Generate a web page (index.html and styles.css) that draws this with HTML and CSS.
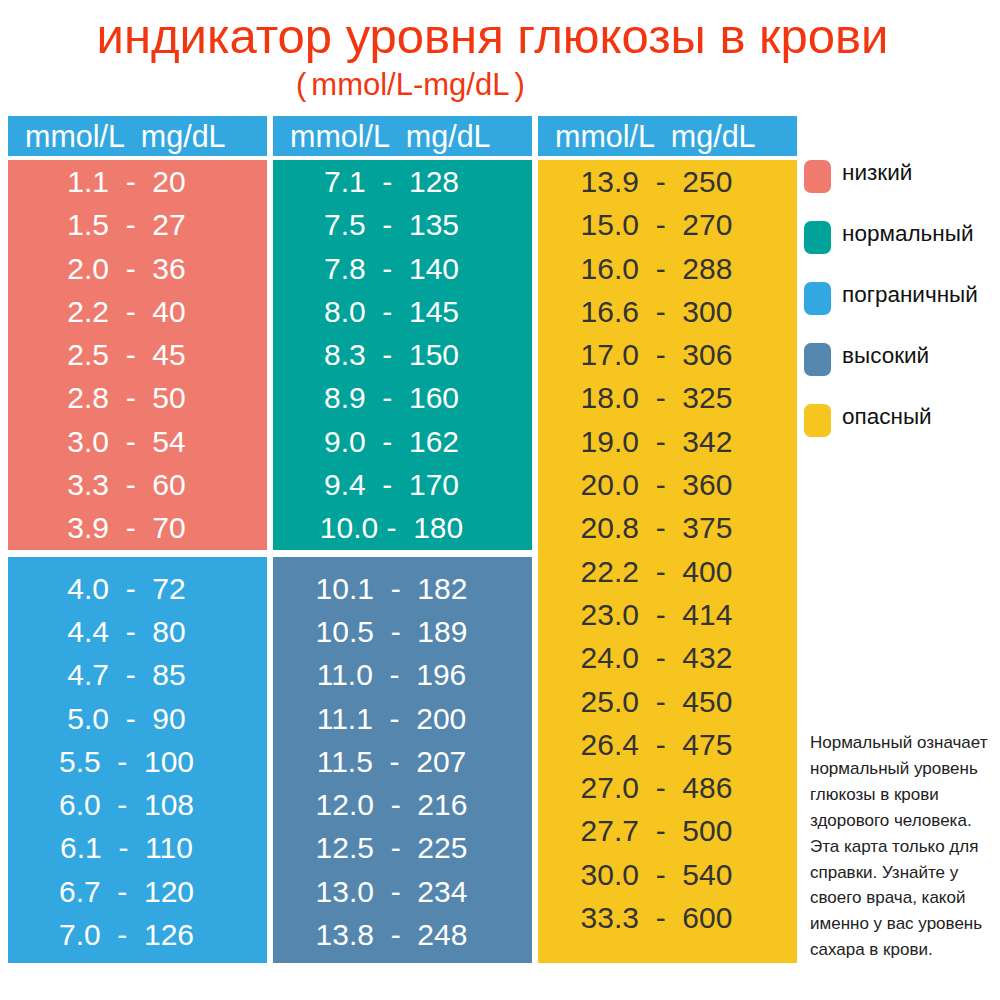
FILE: index.html
```
<!DOCTYPE html>
<html lang="ru">
<head>
<meta charset="utf-8">
<title>индикатор уровня глюкозы в крови</title>
<link rel="stylesheet" href="styles.css">
</head>
<body>
<div class="page">
  <h1 class="title">индикатор уровня глюкозы в крови</h1>
  <div class="subtitle"><span class="paren">(</span>mmol/L-mg/dL<span class="paren">)</span></div>
  <div class="chart">
    <div class="col">
      <div class="head">mmol/L  mg/dL</div>
      <div class="block low">
        <div class="row">1.1  -  20</div>
        <div class="row">1.5  -  27</div>
        <div class="row">2.0  -  36</div>
        <div class="row">2.2  -  40</div>
        <div class="row">2.5  -  45</div>
        <div class="row">2.8  -  50</div>
        <div class="row">3.0  -  54</div>
        <div class="row">3.3  -  60</div>
        <div class="row">3.9  -  70</div>
      </div>
      <div class="block border lower">
        <div class="row">4.0  -  72</div>
        <div class="row">4.4  -  80</div>
        <div class="row">4.7  -  85</div>
        <div class="row">5.0  -  90</div>
        <div class="row">5.5  -  100</div>
        <div class="row">6.0  -  108</div>
        <div class="row">6.1  -  110</div>
        <div class="row">6.7  -  120</div>
        <div class="row">7.0  -  126</div>
      </div>
    </div>
    <div class="col">
      <div class="head">mmol/L  mg/dL</div>
      <div class="block normal">
        <div class="row">7.1  -  128</div>
        <div class="row">7.5  -  135</div>
        <div class="row">7.8  -  140</div>
        <div class="row">8.0  -  145</div>
        <div class="row">8.3  -  150</div>
        <div class="row">8.9  -  160</div>
        <div class="row">9.0  -  162</div>
        <div class="row">9.4  -  170</div>
        <div class="row">10.0 -  180</div>
      </div>
      <div class="block high lower">
        <div class="row">10.1  -  182</div>
        <div class="row">10.5  -  189</div>
        <div class="row">11.0  -  196</div>
        <div class="row">11.1  -  200</div>
        <div class="row">11.5  -  207</div>
        <div class="row">12.0  -  216</div>
        <div class="row">12.5  -  225</div>
        <div class="row">13.0  -  234</div>
        <div class="row">13.8  -  248</div>
      </div>
    </div>
    <div class="col">
      <div class="head">mmol/L  mg/dL</div>
      <div class="block danger">
        <div class="row">13.9  -  250</div>
        <div class="row">15.0  -  270</div>
        <div class="row">16.0  -  288</div>
        <div class="row">16.6  -  300</div>
        <div class="row">17.0  -  306</div>
        <div class="row">18.0  -  325</div>
        <div class="row">19.0  -  342</div>
        <div class="row">20.0  -  360</div>
        <div class="row">20.8  -  375</div>
        <div class="row">22.2  -  400</div>
        <div class="row">23.0  -  414</div>
        <div class="row">24.0  -  432</div>
        <div class="row">25.0  -  450</div>
        <div class="row">26.4  -  475</div>
        <div class="row">27.0  -  486</div>
        <div class="row">27.7  -  500</div>
        <div class="row">30.0  -  540</div>
        <div class="row">33.3  -  600</div>
      </div>
    </div>
    <aside class="side">
      <ul class="legend">
        <li class="item"><span class="sw sw-low"></span><span class="label">низкий</span></li>
        <li class="item"><span class="sw sw-normal"></span><span class="label">нормальный</span></li>
        <li class="item"><span class="sw sw-border"></span><span class="label">пограничный</span></li>
        <li class="item"><span class="sw sw-high"></span><span class="label">высокий</span></li>
        <li class="item"><span class="sw sw-danger"></span><span class="label">опасный</span></li>
      </ul>
      <p class="note">Нормальный означает<br>нормальный уровень<br>глюкозы в крови<br>здорового человека.<br>Эта карта только для<br>справки. Узнайте у<br>своего врача, какой<br>именно у вас уровень<br>сахара в крови.</p>
    </aside>
  </div>
</div>
</body>
</html>
```
FILE: styles.css
```
* { box-sizing: border-box; }
html, body { margin: 0; padding: 0; background: #ffffff; }
body {
  font-family: "Liberation Sans", Arial, sans-serif;
  width: 1000px;
  height: 1000px;
  overflow: hidden;
}
.title {
  margin: 0;
  padding: 6px 15px 0 0;
  font-size: 49px;
  line-height: 60px;
  font-weight: normal;
  color: #f2360f;
  text-align: center;
  white-space: nowrap;
}
.subtitle {
  margin-top: 1px;
  padding-left: 291px;
  font-size: 31px;
  line-height: 36px;
  color: #f2360f;
  white-space: nowrap;
}
.paren { padding: 0 5px; }
.chart {
  margin-top: 13px;
  display: grid;
  grid-template-columns: 259px 259px 259px 1fr;
  column-gap: 6px;
  padding-left: 8px;
}
.col {
  display: flex;
  flex-direction: column;
}
.head {
  height: 40px;
  margin-bottom: 4px;
  padding-left: 17px;
  background: #33a8e0;
  color: #ffffff;
  font-size: 30.5px;
  line-height: 40px;
  white-space: pre;
}
.block {
  color: #ffffff;
}
.block.lower {
  margin-top: 7px;
  padding: 10px 0 5px;
  flex: 1;
}
.row {
  height: 43.3px;
  line-height: 43.3px;
  font-size: 30px;
  text-align: center;
  padding-right: 22px;
  white-space: pre;
}
.low { background: #ef7b6f; }
.normal { background: #00a29a; }
.border { background: #33a8e0; }
.high { background: #5586ad; }
.danger { background: #f7c520; color: #333333; flex: 1; }

.side {
  padding-top: 44px;
  padding-left: 1px;
}
.legend {
  list-style: none;
  margin: 0;
  padding: 0;
  display: flex;
  flex-direction: column;
  gap: 28px;
}
.item {
  display: flex;
  align-items: flex-start;
  gap: 11px;
}
.sw {
  width: 27px;
  height: 33px;
  border-radius: 7px;
  flex: none;
}
.sw-low { background: #ef7b6f; }
.sw-normal { background: #00a29a; }
.sw-border { background: #33a8e0; }
.sw-high { background: #5586ad; }
.sw-danger { background: #f7c520; }
.label {
  font-size: 22.5px;
  line-height: 25px;
  color: #111111;
  white-space: nowrap;
}
.note {
  margin: 293px 0 0 6px;
  font-size: 17px;
  line-height: 25.9px;
  color: #222222;
  white-space: nowrap;
}
```
